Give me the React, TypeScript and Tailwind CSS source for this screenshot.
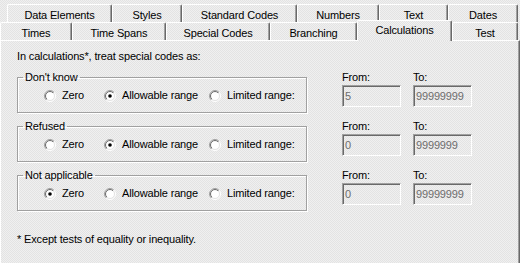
import clsx from "clsx";

const TOP_ROW = [
  { label: "Data Elements", w: "w-[105px]" },
  { label: "Styles", w: "w-[70px]" },
  { label: "Standard Codes", w: "w-[115px]" },
  { label: "Numbers", w: "w-[82px]" },
  { label: "Text", w: "w-[69px]" },
  { label: "Dates", w: "w-[70px]" },
];

const BOTTOM_ROW = [
  { label: "Times", w: "w-[72px]" },
  { label: "Time Spans", w: "w-[94px]" },
  { label: "Special Codes", w: "w-[104px]" },
  { label: "Branching", w: "w-[87px]" },
  { label: "Calculations", w: "w-[95px]", active: true },
  { label: "Test", w: "w-[66px]" },
];

const GROUPS = [
  { title: "Don't know", choice: 1, from: "5", to: "99999999" },
  { title: "Refused", choice: 1, from: "0", to: "9999999" },
  { title: "Not applicable", choice: 0, from: "0", to: "99999999" },
];

const OPTIONS = [
  { label: "Zero", w: "w-[60px]" },
  { label: "Allowable range", w: "w-[105px]" },
  { label: "Limited range:", w: "" },
];

const dither =
  "bg-[repeating-conic-gradient(#f0f0f0_0_25%,#e3e3e3_0_50%)] bg-[length:2px_2px]";

function Tab({ label, w, active }: { label: string; w: string; active?: boolean }) {
  return (
    <div
      className={clsx(
        "flex justify-center border-l border-t border-white border-r border-r-[#696969] shadow-[inset_-1px_0_0_#a0a0a0] rounded-t-[2px] whitespace-nowrap",
        w,
        active ? clsx("relative z-10 -mt-[2px] h-[21px] pt-[3px]", dither) : "h-full pt-[4px]"
      )}
    >
      {label}
    </div>
  );
}

function Radio({ checked }: { checked?: boolean }) {
  return (
    <svg width="12" height="12" viewBox="0 0 12 12" className="shrink-0">
      <defs>
        <linearGradient id="rOuter" x1="0" y1="0" x2="1" y2="1">
          <stop offset="0.5" stopColor="#a0a0a0" />
          <stop offset="0.5" stopColor="#ffffff" />
        </linearGradient>
        <linearGradient id="rInner" x1="0" y1="0" x2="1" y2="1">
          <stop offset="0.5" stopColor="#696969" />
          <stop offset="0.5" stopColor="#e3e3e3" />
        </linearGradient>
      </defs>
      <circle cx="6" cy="6" r="5.5" fill="none" stroke="url(#rOuter)" strokeWidth="1" />
      <circle cx="6" cy="6" r="4.5" fill="#ffffff" stroke="url(#rInner)" strokeWidth="1" />
      {checked && <circle cx="6" cy="6" r="1.8" fill="#000000" />}
    </svg>
  );
}

function Field({ label, value }: { label: string; value: string }) {
  return (
    <div className="flex w-[59px] flex-col">
      <span>{label}</span>
      <div className="mt-[1px] flex h-[22px] items-center border border-t-[#a0a0a0] border-l-[#a0a0a0] border-b-white border-r-white pl-[2px] text-[#6d6d6d] shadow-[inset_1px_1px_0_#696969]">
        {value}
      </div>
    </div>
  );
}

export default function App() {
  return (
    <div
      className={clsx(
        "flex h-[263px] w-[520px] flex-col overflow-hidden pt-[4px] text-[11px] leading-[13px] tracking-[-0.15px] text-black font-['Liberation_Sans',Arial,sans-serif]",
        dither
      )}
    >
      {/* Tab strip */}
      <div className="flex h-[18px] pl-[7px]">
        {TOP_ROW.map((t) => (
          <Tab key={t.label} label={t.label} w={t.w} />
        ))}
      </div>
      <div className="flex h-[18px]">
        {BOTTOM_ROW.map((t) => (
          <Tab key={t.label} label={t.label} w={t.w} active={t.active} />
        ))}
      </div>

      {/* Page */}
      <div className="flex-1 border-l border-t border-white border-r border-r-[#696969] shadow-[inset_-1px_0_0_#a0a0a0] pl-[16px] pt-[9px]">
        <p>In calculations*, treat special codes as:</p>

        <div className="mt-[8px] flex flex-col gap-[7px]">
          {GROUPS.map((g) => (
            <div key={g.title} className="flex items-start">
              <fieldset className="h-[42px] w-[290px] border border-[#a0a0a0] shadow-[inset_1px_1px_0_#fff,1px_1px_0_#fff]">
                <legend className="ml-[5px] px-[2px]">{g.title}</legend>
                <div className="flex items-center pl-[26px] pt-[5px]">
                  {OPTIONS.map((o, i) => (
                    <label key={o.label} className={clsx("flex items-center gap-[6px]", o.w)}>
                      <Radio checked={g.choice === i} />
                      <span>{o.label}</span>
                    </label>
                  ))}
                </div>
              </fieldset>
              <div className="ml-[35px] flex gap-[12px]">
                <Field label="From:" value={g.from} />
                <Field label="To:" value={g.to} />
              </div>
            </div>
          ))}
        </div>

        <p className="mt-[22px]">* Except tests of equality or inequality.</p>
      </div>
    </div>
  );
}
